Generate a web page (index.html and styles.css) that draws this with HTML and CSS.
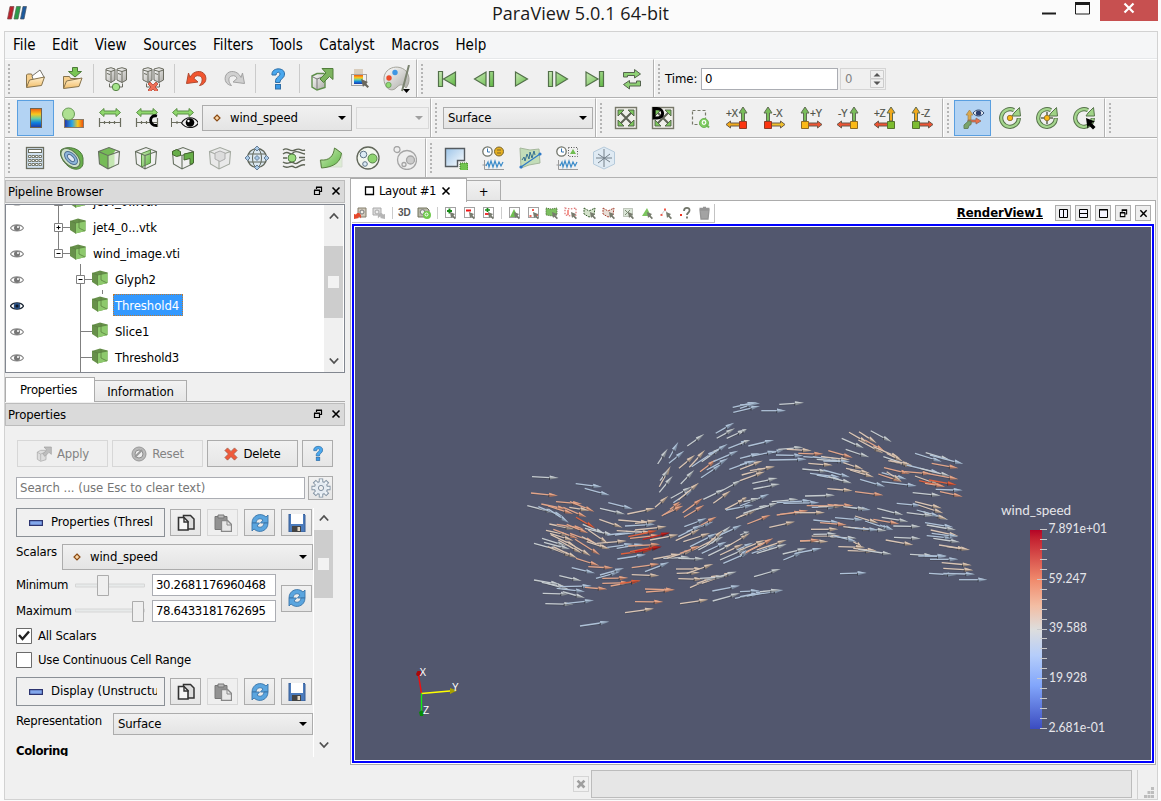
FILE: index.html
```html
<!DOCTYPE html>
<html lang="en">
<head>
<meta charset="utf-8">
<title>ParaView 5.0.1 64-bit</title>
<link rel="stylesheet" href="styles.css">
</head>
<body>
<svg class="defs" width="0" height="0">
<defs>
<linearGradient id="gGreen" x1="0" y1="0" x2="1" y2="1"><stop offset="0" stop-color="#cdebb9"/><stop offset="1" stop-color="#5fb843"/></linearGradient>
<linearGradient id="gFolder" x1="0" y1="0" x2="0" y2="1"><stop offset="0" stop-color="#fff0cf"/><stop offset="1" stop-color="#f3bf6b"/></linearGradient>
<linearGradient id="gRain" x1="0" y1="0" x2="0" y2="1"><stop offset="0" stop-color="#ee5a12"/><stop offset=".3" stop-color="#f9c81d"/><stop offset=".52" stop-color="#69cfa0"/><stop offset=".75" stop-color="#0c7fe0"/><stop offset="1" stop-color="#2338a5"/></linearGradient>
<linearGradient id="gRainH" x1="1" y1="0" x2="0" y2="0"><stop offset="0" stop-color="#e9480f"/><stop offset=".3" stop-color="#f9c81d"/><stop offset=".6" stop-color="#2aa7e6"/><stop offset="1" stop-color="#2331a5"/></linearGradient>
<linearGradient id="gGrey" x1="0" y1="0" x2="1" y2="1"><stop offset="0" stop-color="#fff"/><stop offset="1" stop-color="#aaa9a4"/></linearGradient>
<linearGradient id="gBlue" x1="0" y1="0" x2="1" y2="1"><stop offset="0" stop-color="#9cc4e8"/><stop offset="1" stop-color="#fff"/></linearGradient>
<linearGradient id="gLut" x1="0" y1="0" x2="0" y2="1"><stop offset="0" stop-color="#b40426"/><stop offset=".04" stop-color="#c32030"/><stop offset=".25" stop-color="#f08a6c"/><stop offset=".38" stop-color="#f3bda3"/><stop offset=".5" stop-color="#dddddd"/><stop offset=".63" stop-color="#b5cdfa"/><stop offset=".78" stop-color="#82a6fb"/><stop offset="1" stop-color="#3b4cc0"/></linearGradient>

<symbol id="open" viewBox="0 0 24 24"><path d="M3.500 20V8l1-1h4l1 2h9v4" fill="#f6cf8c" stroke="#86734d"/><path d="M9 9l8-6 4 7-10 5z" fill="#fff" stroke="#77746a"/><path d="M3.500 20.500l3-7.500 15-3-3 8.500z" fill="url(#gFolder)" stroke="#86734d"/></symbol>
<symbol id="save" viewBox="0 0 24 24"><path d="M3.500 21V9.500h6l1 2h9v4" fill="#f6cf8c" stroke="#86734d"/><path d="M3.500 21.500l3-7.500 15.500-3-3 8.500z" fill="url(#gFolder)" stroke="#86734d"/><path d="M12.500.5h5v4h4L15 10 8.500 4.500h4z" fill="#79c654" stroke="#4c7a38"/></symbol>
<symbol id="server" viewBox="0 0 24 24"><g fill="url(#gGrey)" stroke="#6a6b60"><path d="M2 2l5-1.300 4 1.300v11l-4 2.500L2 13z"/><path d="M13 2l5-1.300L22.500 2v11L18 15.500 13 13z"/></g><path d="M2 3l5 1.500v11M7 4.500L11 3M13 3l5 1.500v11M18 4.500L22.500 3M3 6.500l3 1M14 6.500l3 1" fill="none" stroke="#6a6b60"/><path d="M5.500 16.500v3.500h13v-3.500" stroke="#6a6b60" fill="none"/></symbol>
<symbol id="connect" viewBox="0 0 24 24"><use href="#server"/><circle cx="12" cy="20" r="3.700" fill="#a4e48a" stroke="#568246"/></symbol>
<symbol id="disconnect" viewBox="0 0 24 24"><use href="#server"/><path d="M9 15l3 3 3-3 2 2-3 3 3 3-2 2-3-3-3 3-2-2 3-3-3-3z" fill="#ef7057" stroke="#b34432" stroke-width=".8"/></symbol>
<symbol id="undo" viewBox="0 0 24 24"><path d="M3.500 6l1.500 4.500C8 3.500 17 2.500 20 8c2.500 5-.5 10-5.500 10.500C18 15 18 10 14.500 9c-3-1-5 .5-5.500 2.500l4 3.500-11.500 1.500z" fill="#f2552f" stroke="#b04a30"/></symbol>
<symbol id="redo" viewBox="0 0 24 24"><path d="M20.500 6l-1.500 4.500C16 3.500 7 2.500 4 8c-2.500 5 .5 10 5.500 10.500C6 15 6 10 9.500 9c3-1 5 .5 5.500 2.500l-4 3.500 11.500 1.500z" fill="#d0d0d0" stroke="#a2a2a2"/></symbol>
<symbol id="help" viewBox="0 0 24 24"><path d="M6 8C5 0 19 0 18.500 7c0 5-4.500 4-4.500 8.500H9.500C9 9.500 14 10 14 7c0-2.500-3.500-2.500-4 1z" fill="#4aa8ee" stroke="#2f6ea6"/><rect x="9.500" y="17.500" width="5" height="4.500" fill="#3a9ae8" stroke="#2f6ea6"/></symbol>
<symbol id="extract" viewBox="0 0 24 24"><path d="M2 9l5-2.500h7l1 2v12L7 23l-5-3z" fill="url(#gGrey)" stroke="#5f8f4b" stroke-width="1.400"/><path d="M2 9.500l5 2.500v10M7 12l8-3" fill="none" stroke="#777"/><path d="M12 1.500h11v11l-3.500-3-6 6-3.500-3.500 6-6z" fill="#7db35f" stroke="#527f3c"/></symbol>
<symbol id="extractDim" viewBox="0 0 24 24"><path d="M2 9l5-2.500h7l1 2v12L7 23l-5-3z" fill="#ddd" stroke="#a5a5a5"/><path d="M2 9.500l5 2.500v10M7 12l8-3" fill="none" stroke="#aaa"/><path d="M12 1.500h11v11l-3.500-3-6 6-3.500-3.500 6-6z" fill="#bdbdbd" stroke="#9e9e9e"/></symbol>
<symbol id="pickmap" viewBox="0 0 24 24"><path d="M7 2h9v5H7z" fill="#d9cdbd"/><rect x="7" y="8" width="9" height="9" fill="url(#gRain)"/><path d="M4.500 7.500h15v11h-15z" fill="none" stroke="#555" stroke-dasharray="1 1"/><path d="M14 12l7 3-2 1.500 3 3-1.500 1.500-3-3-1.500 2z" fill="#6b675d"/></symbol>
<symbol id="palette" viewBox="0 0 28 28"><path d="M2 15C1 3 16-2 24 6c4 5 4 12 0 17-3-4-6-4-9-1-5 6-12 2-13-7z" fill="url(#gGrey)" stroke="#a5a49b"/><circle cx="7" cy="13" r="2.700" fill="#ec4c2b"/><circle cx="13" cy="7.500" r="2.700" fill="#3f97e4"/><circle cx="6.500" cy="20" r="2.700" fill="#8fda72" stroke="#568246" stroke-width=".6"/><path d="M27 0l-5 19-2 7" stroke="#7b8370" stroke-width="2" fill="none"/><path d="M21 24h7l-3.500 4z" fill="#000"/></symbol>

<symbol id="first" viewBox="0 0 24 24"><path d="M3.500 4.500h4v15h-4zM20.500 5v14L8.500 12z" fill="url(#gGreen)" stroke="#53704a" stroke-width="1.200"/></symbol>
<symbol id="prev" viewBox="0 0 24 24"><path d="M17.500 4.500h4v15h-4zM14 5v14L2.500 12z" fill="url(#gGreen)" stroke="#53704a" stroke-width="1.200"/></symbol>
<symbol id="play" viewBox="0 0 24 24"><path d="M6.500 5l12 7-12 7z" fill="url(#gGreen)" stroke="#53704a" stroke-width="1.200"/></symbol>
<symbol id="next" viewBox="0 0 24 24"><path d="M2.500 4.500h4v15h-4zM10 5v14L21.500 12z" fill="url(#gGreen)" stroke="#53704a" stroke-width="1.200"/></symbol>
<symbol id="last" viewBox="0 0 24 24"><path d="M16.500 4.500h4v15h-4zM3 5v14L15 12z" fill="url(#gGreen)" stroke="#53704a" stroke-width="1.200"/></symbol>
<symbol id="loop" viewBox="0 0 24 24"><path d="M3.500 10V5.500h11V2.500L20.500 7l-6 4V8.500h-7V10z" fill="#8fd175" stroke="#55644e"/><path d="M20.500 14v5h-11v3L3.500 17.500l6-4V16h7v-2z" fill="#8fd175" stroke="#55644e"/></symbol>

<symbol id="cmap" viewBox="0 0 24 24"><rect x="6.500" y="2.500" width="11" height="19" fill="url(#gRain)" stroke="#6e6552"/></symbol>
<symbol id="cmapedit" viewBox="0 0 24 24"><rect x="3.500" y="13.500" width="19" height="8" fill="url(#gRainH)" stroke="#8a7a66"/><circle cx="7.500" cy="8" r="6" fill="#aee092" stroke="#689a55"/></symbol>
<symbol id="arrows" viewBox="0 0 24 24"><path d="M1.500 6.500l4.500-4v2.500h12V2.500l4.500 4-4.500 4V8H6v2.500z" fill="#8fd86c" stroke="#5a8f46"/></symbol>
<symbol id="ruler" viewBox="0 0 24 24"><path d="M1.500 12v9M22.500 12v9M1 16.500h22M6.500 15v3M11.500 15v3M16.500 15v3" stroke="#6b6d5f" stroke-width="1.200" fill="none"/></symbol>
<symbol id="rescale" viewBox="0 0 24 24"><use href="#arrows"/><use href="#ruler"/></symbol>
<symbol id="rescaleC" viewBox="0 0 24 24"><use href="#arrows"/><use href="#ruler"/><path d="M22 10c-8-2-9 10 0 9.500" fill="none" stroke="#000" stroke-width="2.800"/></symbol>
<symbol id="rescaleEye" viewBox="0 0 28 24"><use href="#arrows" width="28" height="24" x="-1"/><path d="M1.500 12v9M1 16.500h10M7 15v3" stroke="#6b6d5f"/><path d="M11.500 17c4-7 13-7 17 0-4 6-13 6-17 0z" fill="#eee" stroke="#111" stroke-width="1.200"/><circle cx="20" cy="16.500" r="4.300"/><circle cx="18.500" cy="15" r="1.200" fill="#fff"/></symbol>
<symbol id="fit" viewBox="0 0 24 24"><rect x="1.500" y="1.500" width="21" height="21" fill="#efefe9" stroke="#77786a" stroke-width="1.400"/><path d="M6 6l12 12M18 6L6 18" stroke="#5e6355" stroke-width="2"/><path d="M4 4h6L4 10zM20 4v6l-6-6zM4 20v-6l6 6zM20 20h-6l6-6z" fill="#7cc85c" stroke="#4f5d45" stroke-width=".9"/></symbol>
<symbol id="fitD" viewBox="0 0 24 24"><use href="#fit"/><path d="M3 2.500h3c7 0 8 9.500 0 9.500H3z" fill="none" stroke="#000" stroke-width="3"/></symbol>
<symbol id="zoombox" viewBox="0 0 24 24"><path d="M4.500 4.500h13v14h-13z" fill="none" stroke="#77786a" stroke-width="1.200" stroke-dasharray="3 2"/><circle cx="16" cy="17" r="4.500" fill="#80cd63" stroke="#6fb854"/><circle cx="16" cy="16.500" r="1.800" fill="none" stroke="#fff" stroke-width="1.200"/><path d="M18 18.500l3 3" stroke="#6fb854" stroke-width="2"/></symbol>
<symbol id="upA" viewBox="0 0 24 24"><path d="M18 1l4 6h-2.500v8h-3V7H14z" stroke="#5f6b52" stroke-width="1"/></symbol>
<symbol id="lfA" viewBox="0 0 24 24"><path d="M1 18.500L5.500 15v2H15v3H5.500v2z" stroke="#6a5a4c" stroke-width="1"/></symbol>
<symbol id="eyeaxes" viewBox="0 0 24 24"><path d="M9 16V6H7l3.500-5L14 6h-2v10z" fill="#dba84d" stroke="#9d814f" stroke-width=".7" transform="translate(-2 3)"/><path d="M9 15h8v-2l5 3-5 3v-2H9z" fill="#e8714a" stroke="#8b6254" stroke-width=".7" transform="translate(-2 -1)"/><path d="M7.500 15L3 19v3.500h4l1-3 2-1.500v-3z" fill="#79a46b" stroke="#66835e"/><path d="M12 7c3-4 8-4 11 0-3 4-8 4-11 0z" fill="#dfe7f0" stroke="#334a70"/><circle cx="17.500" cy="7" r="2.600" fill="#2b3e6c"/></symbol>
<symbol id="rot" viewBox="0 0 24 24"><path d="M20.800 12A8.800 8.800 0 1 1 16 4.200" fill="none" stroke="#56734a" stroke-width="4.200"/><path d="M20.800 12.500A8.800 8.800 0 1 1 16 4.200" fill="none" stroke="#a5d68e" stroke-width="2.200"/><path d="M21.500 1.500l1 8.500h-8.500l2-3z" fill="#9fd386" stroke="#56734a"/></symbol>
<symbol id="rotc" viewBox="0 0 24 24"><use href="#rot"/><circle cx="12" cy="12" r="2.700" fill="#f9b814" stroke="#967931"/></symbol>
<symbol id="rotp" viewBox="0 0 24 24"><use href="#rot"/><path d="M12 6v12M6 12h12" stroke="#5d6650" stroke-width="1.500"/><circle cx="12" cy="12" r="2.700" fill="#f9b814" stroke="#967931"/></symbol>
<symbol id="rota" viewBox="0 0 24 24"><use href="#rot"/><path d="M14 12l9 3.500-3.500 1.500 4 4-2.500 2.500-4-4-1.500 3z" fill="#000"/></symbol>

<symbol id="calc" viewBox="0 0 24 24"><rect x="3.500" y="1.500" width="17" height="21" fill="#cfe0ef" stroke="#6b6d5f" stroke-width="1.300"/><rect x="5.500" y="3.500" width="13" height="3" fill="#fff" stroke="#6b6d5f"/><g fill="#fff" stroke="#6b6d5f" stroke-width=".9"><path d="M5.500 9.500h2.500v2H5.500zM9 9.500h2.500v2H9zM12.500 9.500H15v2h-2.500zM16 9.500h2.500v2H16zM5.500 13.500h2.500v2H5.500zM9 13.500h2.500v2H9zM12.500 13.500H15v2h-2.500zM16 13.500h2.500v2H16zM5.500 17.500h2.500v2H5.500zM9 17.500h2.500v2H9zM12.500 17.500H15v2h-2.500zM16 17.500h2.500v2H16z"/></g></symbol>
<symbol id="contour" viewBox="0 0 24 24"><path d="M1 4C7-1 22 2 23 12v6c-1 6-9 7-15 2C3 16-1 9 1 4z" fill="#69b04c" stroke="#4f7a3e"/><ellipse cx="10.500" cy="12" rx="11.500" ry="7" transform="rotate(45 10.500 12)" fill="#cfe2cb" stroke="#5b764f"/><ellipse cx="11" cy="12" rx="8" ry="4.600" transform="rotate(45 11 12)" fill="#8fb7dc" stroke="#4f6f92"/><ellipse cx="11" cy="12" rx="4.500" ry="2.200" transform="rotate(45 11 12)" fill="#dfe9f4" stroke="#4f6f92"/></symbol>
<symbol id="cube" viewBox="0 0 24 24"><path d="M1.500 5.500L12 1.500 22.500 5.500 21.500 18 11 23 2.500 18zM1.500 5.500l9.500 4V23M22.500 5.500l-11.500 4" fill="none" stroke="#667060" stroke-width="1.100"/></symbol>
<symbol id="clip" viewBox="0 0 24 24"><path d="M1.500 5.500L12 1.500l7 2.500-2.500 3v13L11 23l-8.500-5z" fill="#76bb57"/><path d="M11 9.500l6.500-2v12L11 22z" fill="#c4e6b2"/><use href="#cube"/></symbol>
<symbol id="slice" viewBox="0 0 24 24"><path d="M7.500 7.500l9-3.500v13l-9 4z" fill="url(#gGreen)" stroke="#5a8f46"/><use href="#cube"/></symbol>
<symbol id="threshold" viewBox="0 0 24 24"><use href="#cube"/><path d="M1.500 5.500l4-2 4 2v4l-4 1-4-2zM13 8l9.500-2v11l-3.500 1.500v-6L13 14z" fill="#67ae49" stroke="#44662f"/></symbol>
<symbol id="subset" viewBox="0 0 24 24"><g opacity=".55"><path d="M1.500 5.500L12 1.500 22.500 5.500 21.500 18 11 23 2.500 18z" fill="#e5e5e5"/><use href="#cube"/><path d="M7 7l5-2 5 2v6l-5 2.500L7 13z" fill="#ccc" stroke="#777"/></g></symbol>
<symbol id="glyph" viewBox="0 0 24 24"><circle cx="12" cy="12" r="9.500" fill="#dbe8f1" stroke="#61665a" stroke-width="1.300"/><ellipse cx="12" cy="12" rx="4.500" ry="9.500" fill="none" stroke="#61665a"/><path d="M3.500 8h17M3.500 16h17" stroke="#61665a" fill="none"/><g fill="#a9c9e6" stroke="#4f6781" stroke-width=".8"><path d="M12 0l2.500 2.500L12 5 9.500 2.500zM12 19l2.500 2.500L12 24l-2.500-2.500zM2.500 9.500L5 12l-2.500 2.500L0 12zM21.500 9.500L24 12l-2.500 2.500L19 12zM12 9.500l2.500 2.500-2.500 2.500L9.500 12z"/></g></symbol>
<symbol id="stream" viewBox="0 0 24 24"><path d="M1 4c5-4 6 3 12 0s6 2 10 0M1 8c6-5 7 3 10-1s8 1 12 1M1 12h4M1 16c5 4 8-2 11 1s6-4 11-3M1 20c5 4 8-2 11 1s6-4 11-2M17 11.500h6" fill="none" stroke="#5d6355" stroke-width="1.400"/><circle cx="10" cy="12" r="4" fill="#9adb7d" stroke="#578248"/></symbol>
<symbol id="warp" viewBox="0 0 24 24"><path d="M1 14c9 0 12-3 16-12l6 6v13H2z" fill="#dcebd3" stroke="#d5dccf"/><path d="M1.500 14c9 1 13-4 14-12l7 5c-1 9-7 14-20 15z" fill="url(#gGreen)" stroke="#58803f"/></symbol>
<symbol id="group" viewBox="0 0 24 24"><circle cx="12" cy="12" r="11" fill="#f2f6ee" stroke="#61665a" stroke-width="1.300"/><circle cx="7.500" cy="8.500" r="3.300" fill="#dcebf5" stroke="#5f7588"/><circle cx="16.500" cy="12.500" r="4.500" fill="#8ed36f" stroke="#578248"/><circle cx="9" cy="18" r="2.300" fill="#dcebf5" stroke="#5f7588"/></symbol>
<symbol id="ungroup" viewBox="0 0 24 24"><g fill="#eee" stroke="#a5a5a5" stroke-width="1.300"><circle cx="4" cy="3.500" r="3"/><circle cx="14" cy="14" r="9.500"/><circle cx="17.500" cy="14" r="4" fill="#ccc"/><circle cx="11" cy="18.500" r="2"/></g></symbol>
<symbol id="selframe" viewBox="0 0 24 24"><path d="M1.500 2.500h19v12h-7v6h-12z" fill="url(#gBlue)" stroke="#555b60" stroke-width="1.400"/><path d="M16 17h8v8h-8z" fill="#71c44e" stroke="#3e6e2a" stroke-dasharray="1 1"/></symbol>
<symbol id="plot" viewBox="0 0 24 24"><path d="M3.500 14v9.500H23M1.500 19h4" fill="none" stroke="#999"/><path d="M5 20l2-4 1 5 2-6 2 6 2-6 2 6 2-5 2 4 2-4" fill="none" stroke="#3b8bc9" stroke-width="1.200"/></symbol>
<symbol id="plottime" viewBox="0 0 24 24"><use href="#plot"/><circle cx="6.500" cy="5.500" r="4.700" fill="#fff" stroke="#70746a" stroke-width="1.300"/><path d="M6.500 2.500v3.500H9" fill="none" stroke="#3677b4"/><circle cx="18" cy="5.500" r="4.500" fill="#e6b022" stroke="#78642c"/><path d="M16 4h4M16 7h4" stroke="#78642c"/></symbol>
<symbol id="plotsel" viewBox="0 0 24 24"><use href="#plot"/><circle cx="6.500" cy="5.500" r="4.700" fill="#fff" stroke="#70746a" stroke-width="1.300"/><path d="M6.500 2.500v3.500H9" fill="none" stroke="#3677b4"/><path d="M13.500 1.500h9v9h-9z" fill="none" stroke="#555" stroke-dasharray="1 1.500"/><path d="M18 3l3 5h-6z" fill="#70bd50"/></symbol>
<symbol id="plotline" viewBox="0 0 24 24"><path d="M2 2l10 2 9-1 1 14-11 2-8 3z" fill="#c3ddb8" stroke="#a5b79c"/><path d="M4 14l2-3 1 4 2-7 2 5 1-7 2 6 2-7 1 4" fill="none" stroke="#336f91"/><path d="M3 21L22 8" stroke="#2e79c6" stroke-width="1.200"/><circle cx="3" cy="21" r="1.600" fill="#2e79c6"/><circle cx="22" cy="8" r="1.600" fill="#2e79c6"/></symbol>
<symbol id="probe" viewBox="0 0 24 24"><path d="M1.500 6L12 1l10.500 5v12L12 23 1.500 18z" fill="#dfeaf3" stroke="#b5cadb"/><path d="M12 3v18M4 12h16M6 17l12-9M6 8l12 8" stroke="#74808a"/></symbol>

<symbol id="cell" viewBox="0 0 16 16"><path d="M0 3L8 .5l7.500 2V13L5.500 15.500 0 12z" fill="#67904a"/><path d="M5.500 5l10-2v10l-10 2.500z" fill="#8dc96c"/><path d="M5.500 15.500V5L.5 3M5.500 5l10-2M9 1v9l6 3" fill="none" stroke="#5b8140" stroke-width=".8"/></symbol>
<symbol id="eye" viewBox="0 0 14 10"><path d="M.5 5C3 .8 11 .8 13.500 5 11 9 3 9 .5 5z" fill="#fff" stroke="#8a8a8a" stroke-width="1.200"/><circle cx="7" cy="5" r="3" fill="#777"/><circle cx="8" cy="4" r="1" fill="#fff"/></symbol>
<symbol id="eyeOn" viewBox="0 0 14 10"><path d="M.5 5C3 .8 11 .8 13.500 5 11 9 3 9 .5 5z" fill="#fff" stroke="#1c2735" stroke-width="1.400"/><circle cx="7" cy="5" r="3.200" fill="#274d80"/><circle cx="7" cy="5" r="1.500" fill="#0d1724"/></symbol>
<symbol id="float" viewBox="0 0 10 10"><path d="M3.500 3V1.500h5v4H7M3 1h6" fill="none" stroke="#000" stroke-width="1.200"/><path d="M1.500 4.500h5v4h-5zM1 4h6" fill="none" stroke="#000" stroke-width="1.200"/></symbol>
<symbol id="x" viewBox="0 0 10 10"><path d="M1.500 1.500l7 7M8.500 1.500l-7 7" stroke="#000" stroke-width="1.600"/></symbol>
<symbol id="delx" viewBox="0 0 16 16"><path d="M4 1l4 4 4-4 3 3-4 4 4 4-3 3-4-4-4 4-3-3 4-4-4-4z" fill="#ef5a3b" stroke="#9a5c4c" stroke-width=".8"/></symbol>
<symbol id="dimx" viewBox="0 0 16 16"><path d="M4 1l4 4 4-4 3 3-4 4 4 4-3 3-4-4-4 4-3-3 4-4-4-4z" fill="#9f9f9f"/></symbol>
<symbol id="reset" viewBox="0 0 16 16"><circle cx="8" cy="8" r="7" fill="#b9b9b9" stroke="#999"/><circle cx="8" cy="8" r="4" fill="#eee" stroke="#8e8e8e"/><path d="M4 11l7-7" stroke="#999" stroke-width="2"/></symbol>
<symbol id="gear" viewBox="0 0 20 20"><g stroke="#8292a2" stroke-width="4.400"><path d="M10 .5v19M.5 10h19M3.300 3.300l13.400 13.400M16.700 3.300L3.300 16.700"/></g><circle cx="10" cy="10" r="7" fill="#8292a2"/><g stroke="#eef3f7" stroke-width="2.600"><path d="M10 1.300v17.400M1.300 10h17.400M4 4l12 12M16 4L4 16"/></g><circle cx="10" cy="10" r="6.100" fill="#e6ecf2"/><circle cx="10" cy="10" r="2.600" fill="#f0f0f0" stroke="#8292a2"/></symbol>
<symbol id="copy" viewBox="0 0 18 18"><path d="M6.500 1.500h7l3.500 3.500v10h-10.500z" fill="#ddd" stroke="#333" stroke-width="1.500"/><path d="M1.500 3.500H7l4 4v8.500H1.500z" fill="#f7f7f7" stroke="#333" stroke-width="1.600"/><path d="M7 3.500v4.500h4.500" fill="none" stroke="#333" stroke-width="1.400"/></symbol>
<symbol id="paste" viewBox="0 0 18 18"><path d="M1 2.500h12v13H1z" fill="#929292" stroke="#777"/><path d="M4 1h6v3H4z" fill="#bbb" stroke="#777"/><path d="M7.500 6.500h6l4 4v7h-10z" fill="#e8e8e8" stroke="#888" stroke-width="1.300"/><path d="M13 7v4h4" fill="none" stroke="#888"/></symbol>
<symbol id="refresh" viewBox="0 0 18 18"><path d="M1 9C1 1 10-2 15 3l2-2v8h-7.500L12 6C9 3.500 5.500 5 5 9z" fill="#5aa5df" stroke="#3b75a8" stroke-width=".9"/><path d="M17 9c0 8-9 11-14 6l-2 2V9h7.500L6 12c3 2.500 6.500 1 7-3z" fill="#5aa5df" stroke="#3b75a8" stroke-width=".9"/></symbol>
<symbol id="disk" viewBox="0 0 18 18"><path d="M1 0h15l1 1v17H1z" fill="#4c7cbd" stroke="#365d94"/><path d="M3 0h12v10H3z" fill="#fff"/><path d="M4 12h9v6H4z" fill="#444"/><path d="M9.500 13h2.500v4H9.500z" fill="#e5d9c5"/></symbol>
<symbol id="minus" viewBox="0 0 14 6"><path d="M.6.6h12.800v4.800H.6z" fill="#82a7ec" stroke="#2c3470" stroke-width="1.200"/></symbol>
<symbol id="pt" viewBox="0 0 8 8"><path d="M4 1l3 3-3 3-3-3z" fill="#f8d6a8" stroke="#8a4a14" stroke-width="1.200"/></symbol>
<symbol id="cur" viewBox="0 0 14 14"><path d="M7 6l5 2-1.500 1.500 2.500 2.500-1.200 1.200L9.300 10.700 8 12z" fill="#777b6e"/></symbol>
<symbol id="selbox" viewBox="0 0 14 14"><path d="M2.500 1.500h10v10h-10z" fill="none" stroke="#444" stroke-dasharray="1 1"/></symbol>
</defs>
</svg>

<div class="window">
  <header class="titlebar">
    <svg class="logo" width="20" height="14" viewBox="0 0 20 14"><path d="M3 .5h4L4.500 13h-4z" fill="#b9232d" stroke="#7a4a4a" stroke-width=".7"/><path d="M9.500.5h4L11 13H7z" fill="#2c9a49" stroke="#4b6a50" stroke-width=".7"/><path d="M16 .5h3.500L17 13h-3.500z" fill="#1b5a9e" stroke="#444f60" stroke-width=".7"/></svg>
    <h1>ParaView 5.0.1 64-bit</h1>
    <div class="winbtns">
      <svg width="14" height="13"><path d="M0 11.500h14v2H0z" fill="#1d1d1d"/></svg>
      <svg width="15" height="13"><path d="M.5.500h14v11.500H.5z" fill="none" stroke="#1d1d1d"/><path d="M0 0h15v3H0z" fill="#1d1d1d"/></svg>
      <span class="close"><svg width="12" height="10" viewBox="0 0 12 10"><path d="M1.500.5l9 9M10.500.5l-9 9" stroke="#fff" stroke-width="2.200"/></svg></span>
    </div>
  </header>

  <div class="client">
    <nav class="menubar"><span>File</span><span>Edit</span><span>View</span><span>Sources</span><span>Filters</span><span>Tools</span><span>Catalyst</span><span>Macros</span><span>Help</span></nav>

    <div class="toolrow">
      <div class="tools fileset">
        <i class="handle"></i>
        <b><svg><use href="#open"/></svg></b><b><svg><use href="#save"/></svg></b><i class="sep"></i>
        <b><svg><use href="#connect"/></svg></b><b><svg><use href="#disconnect"/></svg></b><i class="sep"></i>
        <b><svg><use href="#undo"/></svg></b><b><svg><use href="#redo"/></svg></b><i class="sep"></i>
        <b><svg><use href="#help"/></svg></b><i class="sep"></i>
        <b><svg><use href="#extract"/></svg></b><b><svg><use href="#pickmap"/></svg></b><b><svg class="big"><use href="#palette"/></svg></b>
      </div>
      <div class="tools vcr">
        <i class="handle"></i>
        <b><svg><use href="#first"/></svg></b><b><svg><use href="#prev"/></svg></b><b><svg><use href="#play"/></svg></b><b><svg><use href="#next"/></svg></b><b><svg><use href="#last"/></svg></b><b><svg><use href="#loop"/></svg></b>
      </div>
      <div class="tools last">
        <i class="handle narrow"></i>
        <span class="timelabel">Time:</span><span class="field time">0</span>
        <span class="spin">0<svg width="14" height="18"><path d="M.5.500h13v8H.5zM.5 9h13v8.500H.5z" fill="#f0f0f0" stroke="#ccc"/><path d="M3.500 6.500h7L7 3zM3.500 11.500h7L7 15z" fill="#555"/></svg></span>
      </div>
    </div>

    <div class="toolrow">
      <div class="tools">
        <i class="handle"></i>
        <b class="on"><svg><use href="#cmap"/></svg></b><b><svg><use href="#cmapedit"/></svg></b><b><svg><use href="#rescale"/></svg></b><b><svg><use href="#rescaleC"/></svg></b><b><svg class="big"><use href="#rescaleEye"/></svg></b>
        <span class="combo array"><svg width="8" height="8"><use href="#pt"/></svg>wind_speed<i class="arrow"></i></span>
        <span class="combo off"><i class="arrow"></i></span>
      </div>
      <div class="tools">
        <i class="handle mid"></i>
        <span class="combo surf">Surface<i class="arrow"></i></span>
      </div>
      <div class="tools">
        <i class="handle narrow"></i>
        <b><svg><use href="#fit"/></svg></b><b><svg><use href="#fitD"/></svg></b><b><svg><use href="#zoombox"/></svg></b>
        <b><svg viewBox="0 0 24 24"><use href="#upA" fill="#79bd5a"/><use href="#lfA" fill="#f0a91b"/><path d="M14.500 15.500h7v7h-7z" fill="#fb3510" stroke="#8f3a25"/><text x="1" y="11">+X</text></svg></b>
        <b><svg viewBox="0 0 24 24"><g transform="matrix(-1 0 0 1 24 0)"><use href="#upA" fill="#79bd5a"/><use href="#lfA" fill="#f0c02b"/><path d="M14.500 15.500h7v7h-7z" fill="#fb3510" stroke="#8f3a25"/></g><text x="11" y="11">-X</text></svg></b>
        <b><svg viewBox="0 0 24 24"><g transform="matrix(-1 0 0 1 24 0)"><use href="#upA" fill="#79bd5a"/><use href="#lfA" fill="#ee5332"/><path d="M14.500 15.500h7v7h-7z" fill="#fbb917" stroke="#8f6b25"/></g><text x="11" y="11">+Y</text></svg></b>
        <b><svg viewBox="0 0 24 24"><use href="#upA" fill="#79bd5a"/><use href="#lfA" fill="#ee5332"/><path d="M14.500 15.500h7v7h-7z" fill="#fbb917" stroke="#8f6b25"/><text x="2" y="11">-Y</text></svg></b>
        <b><svg viewBox="0 0 24 24"><use href="#upA" fill="#f0a91b"/><use href="#lfA" fill="#ee5332"/><path d="M14.500 15.500h7v7h-7z" fill="#7cbc2f" stroke="#55732e"/><text x="1" y="11">+Z</text></svg></b>
        <b><svg viewBox="0 0 24 24"><g transform="matrix(-1 0 0 1 24 0)"><use href="#upA" fill="#f0a91b"/><use href="#lfA" fill="#ee5332"/><path d="M14.500 15.500h7v7h-7z" fill="#7cbc2f" stroke="#55732e"/></g><text x="11" y="11">-Z</text></svg></b>
      </div>
      <div class="tools">
        <i class="handle narrow"></i>
        <b class="on"><svg><use href="#eyeaxes"/></svg></b><b><svg><use href="#rotc"/></svg></b><b><svg><use href="#rotp"/></svg></b><b><svg><use href="#rota"/></svg></b>
      </div>
      <div class="tools last"><i class="handle"></i></div>
    </div>

    <div class="toolrow">
      <div class="tools filters">
        <i class="handle"></i>
        <b><svg><use href="#calc"/></svg></b><b><svg><use href="#contour"/></svg></b><b><svg><use href="#clip"/></svg></b><b><svg><use href="#slice"/></svg></b><b><svg><use href="#threshold"/></svg></b><b><svg><use href="#subset"/></svg></b><b><svg><use href="#glyph"/></svg></b><b><svg><use href="#stream"/></svg></b><b><svg><use href="#warp"/></svg></b><b><svg><use href="#group"/></svg></b><b><svg><use href="#ungroup"/></svg></b>
      </div>
      <div class="tools last">
        <i class="handle narrow"></i>
        <b><svg><use href="#selframe"/></svg></b><b><svg><use href="#plottime"/></svg></b><b><svg><use href="#plotline"/></svg></b><b><svg><use href="#plotsel"/></svg></b><b><svg><use href="#probe"/></svg></b>
      </div>
    </div>

    <div class="main">
      <aside class="dock">
        <div class="docktitle"><span>Pipeline Browser</span><svg class="ctl"><use href="#float"/></svg><svg class="ctl"><use href="#x"/></svg></div>
        <div class="tree">
          <div class="rows">
            <div class="row"><svg class="eye"><use href="#eye"/></svg><svg class="branch"><path d="M10.500 0v26M10 13.500h12"/><path class="box" d="M6.500 9.500h8v8h-8zM8.500 13.500h4M10.500 11.500v4"/></svg><svg class="cell"><use href="#cell"/></svg><span>jet4_0...vtk</span></div>
            <div class="row"><svg class="eye"><use href="#eye"/></svg><svg class="branch"><path d="M10.500 0v26M10 13.500h12"/><path class="box" d="M6.500 9.500h8v8h-8z"/><path class="sign" d="M8.500 13.500h4M10.500 11.500v4"/></svg><svg class="cell"><use href="#cell"/></svg><span>jet4_0...vtk</span></div>
            <div class="row"><svg class="eye"><use href="#eye"/></svg><svg class="branch"><path d="M10.500 0v13M10 13.500h12"/><path class="box" d="M6.500 9.500h8v8h-8z"/><path class="sign" d="M8.500 13.500h4"/></svg><svg class="cell"><use href="#cell"/></svg><span>wind_image.vti</span></div>
            <div class="row child"><svg class="eye"><use href="#eye"/></svg><svg class="branch"><path d="M10.500 -2v28M10 13.500h12"/><path class="box" d="M6.500 9.500h8v8h-8z"/><path class="sign" d="M8.500 13.500h4"/></svg><svg class="cell"><use href="#cell"/></svg><span>Glyph2</span></div>
            <div class="row child"><svg class="eye"><use href="#eyeOn"/></svg><svg class="branch"><path d="M10.500 0v26M32.500 -2v4"/></svg><svg class="cell"><use href="#cell"/></svg><span class="sel">Threshold4</span></div>
            <div class="row child"><svg class="eye"><use href="#eye"/></svg><svg class="branch"><path d="M10.500 0v26M10 13.500h12"/></svg><svg class="cell"><use href="#cell"/></svg><span>Slice1</span></div>
            <div class="row child"><svg class="eye"><use href="#eye"/></svg><svg class="branch"><path d="M10.500 0v28M10 13.500h12"/></svg><svg class="cell"><use href="#cell"/></svg><span>Threshold3</span></div>
          </div>
          <div class="scroll treescroll"><svg width="10" height="6"><path d="M.8 5.500L5 1l4.200 4.500"/></svg><i class="thumb"></i><svg width="10" height="6"><path d="M.8.500L5 5 9.200.500"/></svg></div>
        </div>

        <div class="tabs"><span class="tab active">Properties</span><span class="tab">Information</span></div>
        <div class="docktitle second"><span>Properties</span><svg class="ctl"><use href="#float"/></svg><svg class="ctl"><use href="#x"/></svg></div>

        <div class="actions">
          <span class="btn dim"><svg width="16" height="16"><use href="#extractDim"/></svg>Apply</span>
          <span class="btn dim"><svg width="16" height="16"><use href="#reset"/></svg>Reset</span>
          <span class="btn"><svg width="14" height="14"><use href="#delx"/></svg>Delete</span>
          <span class="btn sm"><svg width="18" height="17"><use href="#help"/></svg></span>
        </div>
        <div class="search"><span class="field">Search ... (use Esc to clear text)</span><span class="btn"><svg width="20" height="20"><use href="#gear"/></svg></span></div>

        <div class="props">
          <div class="form">
            <div class="section"><span class="head"><svg width="14" height="6"><use href="#minus"/></svg><em>Properties (Thresl</em></span><span class="btn sm"><svg width="18" height="18"><use href="#copy"/></svg></span><span class="btn sm dim"><svg width="18" height="18"><use href="#paste"/></svg></span><span class="btn sm"><svg width="18" height="18"><use href="#refresh"/></svg></span><span class="btn sm"><svg width="18" height="18"><use href="#disk"/></svg></span></div>
            <div class="line scalars"><label>Scalars</label><span class="combo"><svg width="8" height="8"><use href="#pt"/></svg>wind_speed<i class="arrow"></i></span></div>
            <div class="range">
              <div class="sliders">
                <label>Minimum</label><svg class="slider"><path d="M.5 9h69v3h-69z" fill="#e7eaea" stroke="#d6d6d6"/><path d="M22.500.5h11v20h-11z" fill="#efefef" stroke="#acacac"/></svg><span class="field">30.2681176960468</span>
                <label>Maximum</label><svg class="slider"><path d="M.5 8h69v3h-69z" fill="#e7eaea" stroke="#d6d6d6"/><path d="M57.500.5h11v20h-11z" fill="#efefef" stroke="#acacac"/></svg><span class="field">78.6433181762695</span>
              </div>
              <span class="btn sm"><svg width="18" height="18"><use href="#refresh"/></svg></span>
            </div>
            <div class="check"><svg width="16" height="16"><path d="M.5.500h15v15H.5z" fill="#fff" stroke="#6b6b6b"/><path d="M3 7l3.500 4L13 3.500" fill="none" stroke="#222" stroke-width="2.400"/></svg>All Scalars</div>
            <div class="check"><svg width="16" height="16"><path d="M.5.500h15v15H.5z" fill="#fff" stroke="#6b6b6b"/></svg>Use Continuous Cell Range</div>
            <div class="section display"><span class="head"><svg width="14" height="6"><use href="#minus"/></svg><em>Display (Unstructu</em></span><span class="btn sm"><svg width="18" height="18"><use href="#copy"/></svg></span><span class="btn sm dim"><svg width="18" height="18"><use href="#paste"/></svg></span><span class="btn sm"><svg width="18" height="18"><use href="#refresh"/></svg></span><span class="btn sm"><svg width="18" height="18"><use href="#disk"/></svg></span></div>
            <div class="line repr"><label>Representation</label><span class="combo">Surface<i class="arrow"></i></span></div>
            <div class="coloring">Coloring</div>
          </div>
          <div class="scroll propscroll"><svg width="10" height="6"><path d="M.8 5.500L5 1l4.200 4.500"/></svg><i class="thumb"></i><svg width="10" height="6"><path d="M.8.500L5 5 9.200.500"/></svg></div>
        </div>
      </aside>

      <section class="layout">
        <div class="ltabs"><span class="ltab active"><svg width="9" height="9"><path d="M.5 1h8v7.500h-8zM0 1h9" fill="none" stroke="#000" stroke-width="1.300"/></svg><em>Layout #1</em><svg width="10" height="10"><use href="#x"/></svg></span><span class="ltab">+</span></div>
        <div class="frame">
          <div class="viewbar">
            <div class="minis">
              <svg viewBox="0 0 14 14"><path d="M5 2h8v9H5z" fill="#cfc9bb" stroke="#857e6d"/><circle cx="9" cy="6" r="2" fill="#f2f0ea" stroke="#777"/><path d="M1 8l2 .5c2-3 6-1 5 4-1-2-2-2-3-1.500l1 1-5 1z" fill="#e5472a"/></svg>
              <svg viewBox="0 0 14 14"><path d="M1 2h8v7H1z" fill="#ddd" stroke="#aaa"/><circle cx="5" cy="6" r="2" fill="#eee" stroke="#aaa"/><path d="M13 8l-2 .5c-2-3-6-1-5 4 1-2 2-2 3-1.500l-1 1 5 1z" fill="#b5b5b5"/></svg>
              <i></i><span>3D</span>
              <svg viewBox="0 0 14 14"><path d="M1 2h9l2 2v7H1z" fill="#b8b8a8" stroke="#73745f"/><circle cx="5.500" cy="6" r="2.300" fill="#eee" stroke="#777"/><circle cx="10" cy="9" r="4" fill="#6fca4c"/><circle cx="9.500" cy="8.500" r="1.500" fill="none" stroke="#fff"/></svg>
              <i></i>
              <svg viewBox="0 0 14 14"><use href="#selbox"/><path d="M4 5h5M6.500 2.500v5" stroke="#188a18" stroke-width="2"/><use href="#cur"/></svg>
              <svg viewBox="0 0 14 14"><use href="#selbox"/><path d="M4 4.500h5" stroke="#e11" stroke-width="2"/><use href="#cur"/></svg>
              <svg viewBox="0 0 14 14"><use href="#selbox"/><path d="M4 4h5M6.500 2v4" stroke="#188a18" stroke-width="1.700"/><path d="M4 8h5" stroke="#e11" stroke-width="1.700"/><use href="#cur"/></svg>
              <i></i>
              <svg viewBox="0 0 14 14"><use href="#selbox"/><path d="M7 3l4 8H3z" fill="#6fbf50"/><use href="#cur"/></svg>
              <svg viewBox="0 0 14 14"><use href="#selbox"/><path d="M7 3v2M3.500 10h2M10 9h2" stroke="#e32" stroke-width="1.600"/><use href="#cur"/></svg>
              <svg viewBox="0 0 14 14"><path d="M1 2l5 1 6-1v7l-5 1-6-1z" fill="#7cbf60" stroke="#51703f" stroke-dasharray="1 1"/><use href="#cur"/></svg>
              <svg viewBox="0 0 14 14"><path d="M1 2l5 1 6-1v7l-5 1-6-1z" fill="none" stroke="#d77" stroke-width="1.300" stroke-dasharray="1.500 1.500"/><path d="M4 4v5" stroke="#e32"/><use href="#cur"/></svg>
              <svg viewBox="0 0 14 14"><path d="M1 2l5 3 6-3-1 7-5 2-5-3z" fill="#d4e3cb" stroke="#345a2a" stroke-dasharray="2 1"/><use href="#cur"/></svg>
              <svg viewBox="0 0 14 14"><path d="M1 2l5 3 6-3-1 7-5 2-5-3z" fill="#e9ddd5" stroke="#a54030" stroke-dasharray="2 1"/><use href="#cur"/></svg>
              <svg viewBox="0 0 14 14"><path d="M2.500 2.500h9v8h-9z" fill="#dbe6d8" stroke="#90998a" stroke-dasharray="1 1"/><path d="M4 4l5 5M9 4L4 9" stroke="#7b8b73"/><use href="#cur"/></svg>
              <svg viewBox="0 0 14 14"><path d="M7 2l4 8H2z" fill="#7cc65f"/><use href="#cur"/></svg>
              <svg viewBox="0 0 14 14"><path d="M2 9L6 4l5 6" fill="none" stroke="#ccc"/><path d="M6 2.500v2M1.500 9h2" stroke="#e32" stroke-width="1.600"/><use href="#cur"/></svg>
              <svg viewBox="0 0 14 14"><path d="M6 5c0-4 6-4 5.500-.5C11.500 7 9 6.500 9 9M9 10.500v2" fill="none" stroke="#72756a" stroke-width="1.800"/><path d="M2 9h2" stroke="#e32" stroke-width="2"/></svg>
              <svg viewBox="0 0 14 14"><path d="M3 4h9l-1 9H4zM2.500 2.500h10M6 1.500h3" fill="#a3a3a3" stroke="#959595" stroke-width="1.300"/></svg>
            </div>
            <strong>RenderView1</strong>
            <div class="vbtns">
              <span><svg><path d="M.5.500h8v8h-8zM4.500 1v8"/></svg></span><span><svg><path d="M.5.500h8v8h-8zM1 4.500h8"/></svg></span><span><svg><path d="M.5.500h8v8h-8zM0 1h9"/></svg></span><span><svg><use href="#float"/></svg></span><span><svg><use href="#x"/></svg></span>
            </div>
          </div>
          <div class="render">
            <svg id="scene" width="796" height="533" viewBox="355 227 796 533">
              <g id="glyphs"></g>
              <g class="axes"><path d="M421.500 693.500L418.500 675" stroke="#f01010" stroke-width="1.500"/><path d="M421.500 693.500l17-1.500 17-1.500" stroke="#ffff00" stroke-width="1.300" fill="none"/><path d="M421.500 693.500V712" stroke="#10f010" stroke-width="1.300"/><path d="M416 674l1.500-3h3l1 3-1.500 2h-3z" fill="#a80808"/><path d="M450 688l7 2.500-7 3.500z" fill="#a8a000"/><path d="M419 712l2.500-1.500L424 712l-1 4h-3z" fill="#078a07"/><text x="419.500" y="675.500">X</text><text x="452" y="691">Y</text><text x="423" y="714">Z</text></g>
              <rect x="1030" y="530" width="12" height="199" fill="url(#gLut)"/>
              <g id="ticks"></g>
              <g class="legend"><text x="1001" y="515" textLength="70" lengthAdjust="spacingAndGlyphs">wind_speed</text><text x="1048.500" y="533" textLength="58.500" lengthAdjust="spacingAndGlyphs">7.891e+01</text><text x="1048.500" y="583" textLength="38" lengthAdjust="spacingAndGlyphs">59.247</text><text x="1049" y="632" textLength="38" lengthAdjust="spacingAndGlyphs">39.588</text><text x="1049" y="682" textLength="38" lengthAdjust="spacingAndGlyphs">19.928</text><text x="1048.500" y="732" textLength="56.500" lengthAdjust="spacingAndGlyphs">2.681e-01</text></g>
            </svg>
          </div>
        </div>
      </section>
    </div>

    <footer class="status"><span class="abort"><svg width="10" height="10"><use href="#dimx"/></svg></span><span class="progress"></span><span class="grip"><svg width="10" height="11"><path d="M7 0h3v3H7zM3.500 4h3v3h-3zM7 4h3v3H7zM0 8h3v3H0zM3.500 8h3v3h-3zM7 8h3v3H7z" fill="#bdbdbd"/></svg></span></footer>
  </div>
</div>
<script src="scene.js"></script>
</body>
</html>
```
FILE: styles.css
```css
* { box-sizing: border-box; }
body { margin: 0; background: #fbfbfb; font: 13px/16px "DejaVu Sans Condensed", "DejaVu Sans", sans-serif; letter-spacing: -0.2px; color: #000; }
svg { display: block; flex: none; overflow: visible; }
.defs { position: absolute; }
i, em { font-style: normal; display: block; }
.window { width: 1161px; height: 801px; overflow: hidden; display: flex; flex-direction: column; }

.titlebar { height: 31px; flex: none; display: grid; grid-template-columns: 200px 1fr 200px; align-items: start; }
.logo { margin: 6px 0 0 7px; }
.titlebar h1 { margin: 2px 0 0; font: 18px/22px "Open Sans", sans-serif; letter-spacing: 0.08px; text-align: center; color: #1a1a1a; white-space: nowrap; }
.winbtns { display: flex; justify-content: flex-end; gap: 19px; padding-right: 3px; }
.winbtns > svg { margin-top: 2px; }
.winbtns > svg:first-child { margin-top: 1px; }
.close { width: 58px; height: 21px; margin-left: -9px; background: #c75050; display: flex; justify-content: center; padding-top: 3px; }

.client { width: 1154px; height: 769px; margin-left: 4px; border: 1px solid #d2d2d2; background: #f0f0f0; display: flex; flex-direction: column; }
.menubar { height: 27px; flex: none; background: #f5f6f7; border-bottom: 1px solid #e6e8ea; display: flex; gap: 16.500px; padding: 4px 0 0 8px; font-size: 15px; line-height: 18px; letter-spacing: 0; }

.toolrow { height: 40px; flex: none; display: flex; border-bottom: 1px solid #b2b2b2; }
.toolrow:nth-child(2) { height: 39px; }
.tools { display: flex; align-items: center; border-right: 1px solid #b2b2b2; border-top: 1px solid #fff; padding-right: 1px; }
.tools + .tools { border-left: 1px solid #fff; }
.tools.last { border-right: 0; flex: 1; }
.fileset .handle, .filters .handle { margin-right: -1px; }
.fileset, .filters { padding-right: 2px; }
.vcr .handle { margin-right: -2px; }
.vcr { padding-right: 3px; }
.handle { width: 12px; height: 30px; background: radial-gradient(circle at 1px 1px, #b5b5b5 1px, transparent 1.300px) 3px 0 / 12px 4px repeat-y; }
.handle.mid { width: 11px; }
.handle.narrow { width: 10px; }
.sep { width: 7px; height: 29px; border-left: 1px solid #cbcbcb; margin-left: 3px; margin-right: -3px; }
.tools b { width: 37px; height: 36px; display: flex; align-items: center; justify-content: center; }
.tools b svg { width: 24px; height: 24px; }
.tools b svg.big { width: 28px; height: 28px; }
.tools b.on { background: #b3d3f3; border: 1px solid #5a9fe0; }
.toolrow:nth-child(3) .tools + .tools { padding-right: 2px; }
.tools text { font: 10px "Liberation Sans", sans-serif; letter-spacing: -.3px; fill: #50534a; stroke: #50534a; stroke-width: .2; }
.timelabel { margin-right: 3px; width: 33px; letter-spacing: -.05px; }
.field { background: #fff; border: 1px solid #abadb3; height: 22px; padding: 2px 3px; white-space: nowrap; overflow: hidden; }
.field.time { width: 137px; }
.spin { width: 46px; height: 22px; margin-left: 2px; border: 1px solid #d5d5d5; padding: 1px 1px 1px 4px; display: flex; justify-content: space-between; align-items: center; color: #838383; }
.combo { height: 22px; border: 1px solid #acacac; background: linear-gradient(#f1f1f1, #e4e4e4); display: flex; align-items: center; padding: 0 5px 0 4px; }
.combo svg { margin: 0 9px 0 6px; }
.arrow { margin-left: auto; border: 4px solid transparent; border-top-color: #000; border-bottom: 0; }
.combo.array { width: 150px; height: 26px; letter-spacing: -0.1px; }
.combo.off { width: 73px; margin-left: 4px; background: #f0f0f0; border-color: #d9d9d9; }
.combo.off .arrow { border-top-color: #a0a0a0; }
.combo.surf { width: 150px; }

.main { display: flex; height: 589px; flex: none; }
.dock { width: 340px; flex: none; padding-top: 2px; }
.docktitle { height: 23px; background: #dadada; border: 1px solid #bcbcbc; display: flex; align-items: center; padding: 0 3px 0 2px; gap: 8px; letter-spacing: -0.1px; }
.docktitle span { flex: 1; }
.ctl { width: 10px; height: 10px; margin-bottom: 2px; }
.tree { height: 169px; margin-top: 1px; border: 1px solid #828790; background: #fff; display: flex; overflow: hidden; letter-spacing: -0.1px; }
.rows { flex: 1; margin-top: -17px; }
.row { height: 26px; display: flex; align-items: center; }
.eye { width: 14px; height: 10px; margin-left: 4px; margin-top: 1px; }
.branch { width: 22px; height: 26px; margin-left: 24px; fill: none; stroke: #808080; }
.branch .box { fill: #fff; }
.branch .sign { stroke: #000; }
.child .branch { margin-left: 46px; }
.cell { width: 16px; height: 16px; margin-bottom: 3px; }
.row span { height: 22px; padding: 4px 3px 2px; margin-left: 4px; }
.row .sel { background: #3399ff; color: #fff; outline: 1px dotted #c07a30; outline-offset: -1px; width: 70px; margin-left: 5px; padding-left: 2px; }
.scroll { width: 19px; background: #f0f0f0; display: flex; flex-direction: column; align-items: center; }
.scroll svg path { fill: none; stroke: #505050; stroke-width: 1.800; }
.thumb { width: 19px; background: #cdcdcd; display: flex; align-items: center; justify-content: center; }
.thumb::after { content: ""; width: 11px; height: 12px; background: #f2f2f2; }
.treescroll { padding-top: 8px; margin-right: 1px; }
.treescroll .thumb { height: 72px; margin: 27px 0 40px; }

.tabs { display: flex; align-items: flex-end; height: 28px; margin-top: 1px; border-bottom: 1px solid #acacac; }
.tab { height: 21px; padding: 3px 0 0; width: 92px; text-align: center; border: 1px solid #acacac; border-left: 0; border-bottom: 0; background: linear-gradient(#f2f2f2, #e6e6e6); letter-spacing: -0.1px; }
.tab.active { width: 90px; height: 25px; margin-bottom: -1px; padding: 4px 3px 0 0; background: #fff; border-left: 1px solid #acacac; letter-spacing: -0.2px; }
.second { margin-top: 1px; }
.btn { height: 27px; border: 1px solid #acacac; background: linear-gradient(#f1f1f1, #e6e6e6); display: flex; align-items: center; justify-content: center; gap: 5px; }
.btn.dim { background: #efefef; border-color: #d7d7d7; color: #838383; }
.btn.sm { width: 31px; flex: none; }
.actions { display: grid; grid-template-columns: 91px 91px 91px 31px; gap: 4px; margin: 14px 0 0 12px; }
.search { display: flex; margin: 9px 0 0 11px; align-items: center; gap: 3px; }
.search .field { width: 289px; color: #757575; letter-spacing: -0.05px; }
.search .btn { width: 25px; height: 24px; }

.props { display: flex; height: 249px; margin: 8px 0 0 11px; overflow: hidden; }
.form { width: 298px; border-right: 1px solid #fff; flex: none; }
.section { display: flex; align-items: center; gap: 6px; width: 296px; }
.head { width: 149px; height: 29px; margin-right: -1px; border: 1px solid #8b9096; display: flex; align-items: center; gap: 8px; padding-left: 12px; }
.head em { overflow: hidden; white-space: nowrap; width: 106px; height: 17px; letter-spacing: -0.05px; }
.line { display: flex; width: 297px; }
.line .combo { margin-left: auto; }
.scalars { margin-top: 7px; }
.scalars .combo { width: 251px; height: 26px; letter-spacing: -0.1px; }
.range { display: flex; justify-content: space-between; align-items: center; width: 296px; margin-top: 4px; height: 48px; }
.sliders { display: grid; grid-template-columns: 59px 77px 124px; row-gap: 4px; align-items: center; }
.slider { width: 70px; height: 21px; }
.sliders .field { letter-spacing: -0.35px; }
.sliders label { letter-spacing: -0.3px; }
.check { display: flex; align-items: center; height: 16px; gap: 6px; margin-top: 6px; }
.check + .check { margin-top: 8px; }
.display { margin-top: 9px; }
.repr { margin-top: 7px; }
.repr .combo { width: 200px; }
.coloring { font-weight: bold; margin-top: 8px; letter-spacing: -0.4px; height: 13px; overflow: hidden; }
.propscroll { padding-top: 7px; }
.propscroll .thumb { height: 68px; margin: 9px 0 144px; }

.layout { flex: 1; margin-left: 5px; margin-right: 2px; }
.ltabs { height: 22px; display: flex; align-items: flex-end; }
.ltab { width: 34px; height: 20px; border: 1px solid #acacac; border-left: 0; border-bottom: 0; background: linear-gradient(#f2f2f2, #e6e6e6); text-align: center; padding-top: 3px; }
.ltab.active { width: 117px; height: 24px; margin-bottom: -2px; background: #fff; border-left: 1px solid #acacac; padding: 0 0 0 14px; display: flex; align-items: center; gap: 5px; z-index: 1; letter-spacing: -.4px; }
.frame { height: 565px; background: #fff; border: 1px solid #acacac; padding: 2px 1px; }
.viewbar { height: 20px; display: flex; align-items: center; margin-bottom: 1px; }
.minis { display: flex; align-items: center; border: 1px solid #c3c3c3; border-top: 0; border-left: 0; height: 19px; width: 363px; gap: 5px; padding-left: 1px; }
.minis svg { width: 14px; height: 14px; }
.minis i { width: 1px; height: 12px; background: #ccc; margin: 0 0.500px; }
.minis span { font: bold 10px "Liberation Sans", sans-serif; letter-spacing: 0; color: #555; width: 14px; }
.viewbar strong { margin-left: auto; text-decoration: underline; letter-spacing: -0.08px; margin-right: 12px; }
.vbtns { display: flex; gap: 4px; margin-right: 3px; }
.vbtns span { width: 16px; height: 16px; border: 1px solid #acacac; background: #eee; padding: 3px; }
.vbtns svg { width: 9px; height: 9px; fill: #f4f4ff; stroke: #000; }
.render { height: 539px; border: 2px solid #0000ff; background: #52576e; outline: 1px solid #fff; outline-offset: -3px; padding: 1px; }
#scene { overflow: hidden; }
.legend text { font: 13px Lato, sans-serif; fill: #e6e6ea; letter-spacing: 0; }
.axes text { font: 10px "Liberation Sans", sans-serif; fill: #fff; letter-spacing: 0; }

.status { flex: 1; display: flex; align-items: flex-start; justify-content: flex-end; padding-top: 3px; }
.abort { width: 16px; height: 16px; margin: 6px 2px 0 0; border: 1px solid #d5d5d5; display: flex; align-items: center; justify-content: center; }
.progress { width: 541px; height: 28px; border: 1px solid #bcbcbc; background: #e6e6e6; }
.grip { width: 20px; height: 29px; margin: 0 0 0 5px; border-left: 1px solid #d0d0d0; padding: 17px 0 0 6px; }
```
FILE: scene.js
```js
// Wind glyphs: one "x1 y1 x2 y2 colour" record per arrow, in thirds of a pixel.
const COLORS = {
  g: ['#c6ccd0', '#858b90'], b: ['#afc2d8', '#7c8da2'], w: ['#dac5b4', '#988676'],
  o: ['#e3a589', '#a56f5b'], r: ['#e0603c', '#9a4030'], R: ['#c4241f', '#821618']
};
const PATCHES = [
  { x: 520, y: 390, data: `36 260 116 264 g|167 281 246 291 b|194 295 269 316 b|33 309 114 317 o|22 347 105 368 g|64 342 140 358 o|108 335 186 342 o|150 335 223 365 o|130 352 200 382 o|148 352 208 362 w|84 348 160 372 o|55 350 130 380 b|85 357 146 398 b|168 382 225 415 r|88 402 165 418 w|110 403 190 416 o|140 403 205 430 o|188 403 255 432 g|78 421 150 437 w|90 430 160 452 w|100 418 175 446 o|92 434 168 470 w|150 430 225 458 o|66 445 140 468 g|42 460 120 482 g|72 457 150 478 g|83 470 160 500 w|100 470 172 505 w|115 450 185 490 w|140 455 212 498 w|165 448 240 495 o|185 440 262 478 w|195 415 280 436 g|205 420 265 462 w|200 455 270 478 w|238 388 308 413 w|240 355 315 373 g|265 338 338 357 b|322 372 405 355 w|405 352 445 318 w|295 390 390 398 w|315 408 405 403 b|345 400 410 392 w|262 435 345 425 b|285 435 370 425 b|290 422 395 428 w|325 440 412 422 r|330 445 420 436 o|345 420 440 410 w|368 448 450 428 R|390 450 475 434 w|262 472 340 462 b|230 460 320 453 w|290 475 370 462 b|303 492 395 480 r|330 485 415 468 r|345 486 425 470 R|325 468 420 463 o|292 507 378 494 b|168 505 238 527 o|155 533 225 550 b|205 530 280 534 o|228 565 300 545 b|240 555 312 535 b|247 565 325 564 o|247 580 330 578 o|272 588 362 572 o|300 580 362 572 r|335 533 418 522 o|375 545 448 517 b|335 554 418 557 w|42 570 120 583 g|118 557 185 573 g|65 577 140 592 g|80 580 150 600 g|120 590 215 588 b|195 592 262 598 o|68 610 150 612 g|110 595 195 605 b|128 605 195 624 g|76 641 160 643 g|140 640 222 631 b|375 597 465 600 o|378 606 460 600 o|345 635 430 636 o|315 668 402 656 w|180 708 268 695 b|480 641 565 629 w|578 633 660 610 g|577 603 660 587 b|400 507 480 492 w|430 505 510 502 g|475 505 552 507 g|468 537 550 537 w|470 550 540 548 w|475 566 550 568 w|500 550 580 522 w|510 593 580 562 w|530 580 600 555 w|545 580 640 547 w|560 570 650 545 g|540 565 615 560 g|413 222 443 176 g|447 205 475 156 b|447 220 493 182 b|418 290 452 228 w|420 272 445 240 g|418 307 458 258 g|502 168 553 132 g|477 235 525 195 w|508 232 555 180 w|482 282 523 240 g|515 230 590 180 b|540 245 590 208 o|543 263 605 222 b|560 240 625 205 b|545 215 605 172 g|570 195 623 162 b|580 215 655 182 b|587 130 643 98 b|590 145 645 115 g|620 145 680 118 g|625 175 690 150 b|638 52 710 36 b|640 67 720 48 b|628 238 700 212 b|452 325 515 290 g|460 338 520 298 b|475 330 537 278 w|425 378 485 340 o|430 375 490 347 o|450 358 480 335 o|488 368 548 325 o|492 382 553 345 o|550 328 615 297 g|580 340 632 302 w|600 305 665 270 g|615 358 680 325 w|618 360 700 345 b|648 385 700 362 w|493 410 560 385 b|500 425 580 395 b|520 418 590 380 o|467 452 540 418 w|475 440 545 405 b|490 455 570 430 w|510 470 590 430 b|520 480 600 440 w|440 505 520 480 w|480 490 540 468 o|535 480 610 440 g|545 490 620 455 b|565 497 640 460 g|575 460 632 408 g|590 440 665 405 b|600 495 670 462 w|600 510 680 475 g|610 520 690 485 b|620 470 690 430 w|650 480 700 458 b|560 465 610 420 w|645 625 720 610 b` },
  { x: 740, y: 390, data: `0 45 60 40 b|0 55 50 38 b|118 43 192 38 g|64 62 138 62 b|0 130 20 117 g|0 162 30 150 g|25 168 102 150 b|0 205 60 190 b|35 198 110 183 b|95 188 130 180 b|115 178 190 172 g|140 178 215 182 w|108 195 190 197 b|88 210 200 208 b|175 190 250 192 o|190 200 270 205 b|0 238 68 212 w|0 225 50 212 b|5 255 80 235 w|0 272 75 245 w|30 242 105 230 w|37 280 113 264 g|40 297 120 282 g|0 348 88 312 b|10 335 60 325 g|0 380 52 358 w|10 370 85 345 g|22 402 92 375 o|45 360 115 338 g|95 335 175 328 g|110 338 215 332 b|130 340 238 338 b|88 412 165 395 w|110 375 190 365 o|120 373 205 362 o|165 368 255 368 w|195 318 285 316 g|200 347 290 348 o|215 352 290 352 b|235 350 310 348 w|265 345 340 347 o|205 220 278 226 w|218 200 300 212 b|230 208 320 215 g|245 200 330 210 w|265 182 338 203 o|250 213 330 215 b|187 237 265 245 g|210 250 300 262 b|230 255 305 270 b|250 240 330 262 b|265 260 335 280 g|305 145 372 175 g|317 178 388 202 g|310 218 370 238 w|318 235 390 250 w|330 240 402 262 w|327 127 385 160 w|357 125 410 160 w|392 122 455 156 g|355 150 430 190 w|375 150 435 185 o|400 170 480 205 w|440 190 490 215 w|430 200 520 230 g|445 212 520 230 w|360 268 435 290 b|262 296 338 302 w|345 305 430 316 o|415 252 485 275 o|425 248 500 268 b|432 233 510 252 o|440 245 485 275 w|450 212 515 225 w|425 275 530 288 b|495 245 575 252 o|525 190 605 215 b|557 188 630 210 g|570 195 670 222 b|575 220 655 235 o|500 225 600 250 b|540 235 630 258 g|560 250 655 268 o|525 258 600 285 w|537 272 615 290 r|567 270 650 285 r|555 280 615 290 o|587 298 668 301 b|600 305 668 320 o|518 308 602 317 g|470 340 545 347 b|525 335 605 355 w|535 345 610 370 w|550 365 625 390 g|568 370 620 388 w|530 360 600 380 b|500 368 580 378 g|412 355 490 375 g|425 382 505 395 g|400 388 478 402 o|345 378 415 400 w|220 390 300 398 b|240 398 320 405 o|285 383 370 390 b|325 352 392 360 b|310 350 380 358 g|213 418 295 418 w|215 438 300 438 w|220 433 290 432 g|180 453 265 455 w|180 453 240 450 o|310 410 395 420 w|325 412 440 422 g|345 415 415 420 b|375 393 455 420 b|420 405 460 420 b|460 408 542 410 g|462 442 542 446 g|270 440 350 445 g|280 437 350 455 b|340 455 365 470 w|437 450 520 465 w|295 470 375 472 w|323 482 405 484 w|340 475 410 482 w|355 478 455 493 g|555 398 640 412 b|560 405 648 420 g|572 420 655 438 w|560 437 640 445 b|575 430 655 440 b|580 445 660 457 g|597 465 680 478 w|620 470 690 480 w|510 493 580 497 g|535 498 620 497 b|570 508 655 508 b|555 498 620 500 b|605 518 695 526 w|610 535 700 541 w|567 550 650 555 b|610 550 705 553 b|657 569 742 569 b|300 551 380 549 b|42 560 122 537 g|0 605 60 602 b|0 620 75 605 b|20 618 130 600 b|60 605 120 600 g|128 492 200 475 g|130 510 190 485 b|165 490 245 475 b|0 480 75 450 w|0 495 80 455 w|10 492 100 445 o|35 490 110 465 b|50 480 140 450 w|50 490 140 463 g|0 435 28 425 g|0 500 20 480 b|0 335 20 322 w` }
];

function arrow(x1, y1, x2, y2, [light, dark]) {
  const dx = x2 - x1, dy = y2 - y1, len = Math.hypot(dx, dy) || 1;
  const ux = dx / len, uy = dy / len;
  const head = Math.min(9, len * 0.55), bx = x2 - ux * head, by = y2 - uy * head;
  const p = (x, y) => x.toFixed(1) + ' ' + y.toFixed(1);
  const w = 2.1;
  const left = p(bx + uy * w, by - ux * w), right = p(bx - uy * w, by + ux * w);
  return `<path d="M${p(x1, y1 + 1)}L${p(bx, by + 1)}" stroke="#3f434f" stroke-opacity=".55"/>` +
    `<path d="M${p(x1, y1)}L${p(bx, by)}" stroke="${light}" stroke-width="1.3"/>` +
    `<path d="M${left}L${p(x2, y2)}L${right}Z" fill="${dark}"/>` +
    `<path d="M${left}L${p(x2, y2)}L${p(bx, by)}Z" fill="${light}"/>` +
    `<path d="M${p(bx - .2, by)}l0 2.400" stroke="#34373f" stroke-opacity=".8"/>`;
}

let out = '';
for (const patch of PATCHES) {
  for (const rec of patch.data.split('|')) {
    const f = rec.split(' ');
    const [a, b, c, d] = f.slice(0, 4).map(Number);
    out += arrow(patch.x + a / 3, patch.y + b / 3, patch.x + c / 3, patch.y + d / 3, COLORS[f[4]]);
  }
}
document.getElementById('glyphs').innerHTML = out;

// Scale ticks on the colour legend.
let ticks = '';
for (let k = 0; k <= 20; k++) {
  const y = (529.5 + Math.round(k * 9.95)).toFixed(1);
  const major = k % 5 === 0;
  const start = major && k > 0 && k < 20 ? 1037 : 1040;
  ticks += `<path d="M${start} ${y}H1047" stroke="#c9c9cc"/>`;
}
document.getElementById('ticks').innerHTML = ticks;
```
